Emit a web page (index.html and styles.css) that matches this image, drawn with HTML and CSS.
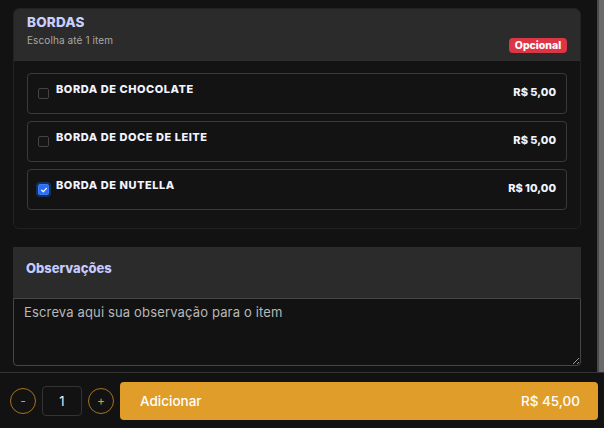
FILE: index.html
```html
<!DOCTYPE html>
<html lang="pt-BR">
<head>
<meta charset="utf-8">
<link rel="stylesheet" href="styles.css">
</head>
<body>
<div class="app">
  <div class="scroll">
    <div class="content">
      <section class="card">
        <header class="card-head">
          <div class="head-text">
            <h2 class="title">BORDAS</h2>
            <p class="subtitle">Escolha até 1 item</p>
          </div>
          <span class="badge">Opcional</span>
        </header>
        <div class="options">
          <label class="option">
            <span class="check"></span>
            <span class="opt-name">BORDA DE CHOCOLATE</span>
            <span class="opt-price">R$ 5,00</span>
          </label>
          <label class="option">
            <span class="check"></span>
            <span class="opt-name">BORDA DE DOCE DE LEITE</span>
            <span class="opt-price">R$ 5,00</span>
          </label>
          <label class="option">
            <span class="check checked"><svg viewBox="0 0 10 10" width="8" height="8"><path d="M2 5.2 L4.1 7.2 L8 3" fill="none" stroke="#fff" stroke-width="1.6" stroke-linecap="round" stroke-linejoin="round"/></svg></span>
            <span class="opt-name">BORDA DE NUTELLA</span>
            <span class="opt-price">R$ 10,00</span>
          </label>
        </div>
      </section>
      <section class="obs">
        <header class="obs-head">Observações</header>
        <textarea class="obs-input" placeholder="Escreva aqui sua observação para o item"></textarea>
      </section>
    </div>
    <div class="scrollbar"><div class="thumb"></div></div>
  </div>
  <footer class="footer">
    <button class="round">-</button>
    <div class="qty">1</div>
    <button class="round">+</button>
    <button class="add"><span>Adicionar</span><span>R$ 45,00</span></button>
  </footer>
</div>
</body>
</html>
```
FILE: styles.css
```css
* { box-sizing: border-box; }
html, body { margin: 0; padding: 0; }
body {
  background: #121212;
  font-family: "Inter", "Open Sans", sans-serif;
  color: #fff;
  width: 604px;
  height: 428px;
  overflow: hidden;
}
.app { display: flex; flex-direction: column; height: 428px; }
.scroll { display: flex; height: 372px; }
.content { flex: 1; padding: 8px 16px 0 13px; }
.scrollbar { width: 7px; background: #4a4a4a; display: flex; justify-content: flex-end; }
.thumb { width: 5px; background: #6a6a6a; }

.card {
  border: 1px solid #222;
  border-radius: 6px;
  background: #131313;
  overflow: hidden;
}
.card-head {
  background: #2b2b2b;
  height: 52px;
  padding: 5px 13px 0 13px;
  display: flex;
  justify-content: space-between;
  border-bottom: 1px solid #2f2f2f;
}
.title {
  margin: 0;
  font-size: 13.5px;
  line-height: 17px;
  font-weight: 800;
  color: #c9cfff;
  letter-spacing: 0.2px;
}
.subtitle {
  margin: 3px 0 0;
  font-size: 10px;
  line-height: 12px;
  color: #a8a8a8;
  letter-spacing: 0.1px;
}
.badge {
  align-self: flex-end;
  margin-bottom: 7px;
  height: 15px;
  width: 58px;
  border-radius: 4px;
  background: #dc3545;
  color: #fff;
  font-size: 10.5px;
  font-weight: 800;
  line-height: 15px;
  text-align: center;
}
.options {
  padding: 12px 13px 18px;
  display: flex;
  flex-direction: column;
  gap: 7px;
}
.option {
  height: 41px;
  border: 1px solid #3a3a3a;
  border-radius: 4px;
  display: flex;
  align-items: flex-start;
  padding: 8px 10px 0 10px;
}
.check {
  width: 11px;
  height: 11px;
  margin-top: 6px;
  border: 1px solid #444;
  border-radius: 2px;
  background: #151515;
  flex: none;
  display: flex;
  align-items: center;
  justify-content: center;
}
.check.checked {
  background: #2b6df3;
  border-color: #3d7cf6;
  box-shadow: 0 0 0 2px #14305f;
}
.opt-name {
  margin-left: 7px;
  flex: 1;
  font-size: 11px;
  line-height: 14px;
  font-weight: 800;
  color: #f2f4ff;
  letter-spacing: 0.55px;
}
.opt-price {
  margin-top: 3px;
  font-size: 11px;
  line-height: 14px;
  font-weight: 800;
  color: #f2f4ff;
  letter-spacing: 0;
}

.obs { margin-top: 18px; }
.obs-head {
  background: #2b2b2b;
  height: 51px;
  padding: 13px 13px 0;
  font-size: 13px;
  line-height: 16px;
  font-weight: 800;
  color: #c5cbff;
}
.obs-input {
  display: block;
  width: 100%;
  height: 68px;
  margin: 0;
  background: #121212;
  border: 1px solid #454545;
  border-radius: 0 0 4px 4px;
  padding: 5px 10px;
  font-family: "Inter", "Open Sans", sans-serif;
  font-size: 13px;
  line-height: 16px;
  letter-spacing: 0.15px;
  color: #ddd;
  resize: vertical;
  outline: none;
}
.obs-input::placeholder { color: #b8b8b8; }

.footer {
  border-top: 1px solid #333;
  flex: 1;
  display: flex;
  align-items: center;
  padding: 0 6px 0 10px;
  gap: 6px;
}
.round {
  width: 26px;
  height: 26px;
  border-radius: 50%;
  border: 1px solid #a8731c;
  background: transparent;
  color: #e09d2b;
  font-family: "Inter", sans-serif;
  font-size: 12px;
  padding: 0;
  line-height: 24px;
}
.qty {
  width: 40px;
  height: 30px;
  border: 1px solid #333;
  border-radius: 4px;
  display: flex;
  align-items: center;
  justify-content: center;
  font-size: 13px;
  color: #eef;
}
.add {
  flex: 1;
  height: 38px;
  border: none;
  border-radius: 4px;
  background: #e09d2a;
  color: #fff;
  display: flex;
  justify-content: space-between;
  align-items: center;
  padding: 0 18px 0 20px;
  font-family: "Inter", sans-serif;
  font-size: 13.5px;
  font-weight: 500;
}
```
